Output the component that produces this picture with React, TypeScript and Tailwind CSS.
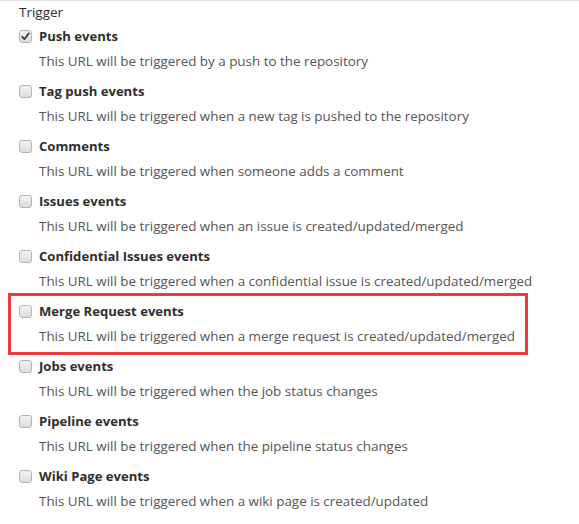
import React from "react";

const items: { title: string; desc: string; checked?: boolean; highlight?: boolean }[] = [
  { title: "Push events", desc: "This URL will be triggered by a push to the repository", checked: true },
  { title: "Tag push events", desc: "This URL will be triggered when a new tag is pushed to the repository" },
  { title: "Comments", desc: "This URL will be triggered when someone adds a comment" },
  { title: "Issues events", desc: "This URL will be triggered when an issue is created/updated/merged" },
  { title: "Confidential Issues events", desc: "This URL will be triggered when a confidential issue is created/updated/merged" },
  { title: "Merge Request events", desc: "This URL will be triggered when a merge request is created/updated/merged", highlight: true },
  { title: "Jobs events", desc: "This URL will be triggered when the job status changes" },
  { title: "Pipeline events", desc: "This URL will be triggered when the pipeline status changes" },
  { title: "Wiki Page events", desc: "This URL will be triggered when a wiki page is created/updated" },
];

function Box({ checked }: { checked?: boolean }) {
  return (
    <span className="relative flex h-[13px] w-[13px] shrink-0 items-center justify-center rounded-[3px] border border-[#b4b4b4] bg-gradient-to-b from-[#f4f4f4] to-[#dcdcdc]">
      {checked && (
        <svg width="9" height="9" viewBox="0 0 9 9">
          <path d="M1.2 4.8 L3.4 7.2 L7.8 1.4" fill="none" stroke="#3a3a3a" strokeWidth="1.8" strokeLinecap="round" strokeLinejoin="round" />
        </svg>
      )}
    </span>
  );
}

export default function App() {
  return (
    <div
      className="h-[524px] w-[579px] overflow-hidden border-t border-[#e5e5e5] bg-white pl-[19px] pt-px text-[13.5px] leading-[20px] text-[#2e2e2e]"
      style={{ fontFamily: '"Open Sans", "Noto Sans", sans-serif' }}
    >
      <div className="h-[20px]">Trigger</div>
      <div className="mt-[4px] flex flex-col gap-[10px]">
        {items.map((it) => (
          <div key={it.title} className="relative">
            {it.highlight && (
              <div className="pointer-events-none absolute left-[-11px] top-[-8px] h-[62px] w-[520px] border-[3px] border-[#ee3a3a]" />
            )}
            <label className="flex h-[20px] items-center gap-[7px]">
              <Box checked={it.checked} />
              <span className="text-[13.1px] font-bold">{it.title}</span>
            </label>
            <div className="mt-[5px] h-[20px] pl-[20px] text-[13.4px] text-[#555555]">{it.desc}</div>
          </div>
        ))}
      </div>
    </div>
  );
}
